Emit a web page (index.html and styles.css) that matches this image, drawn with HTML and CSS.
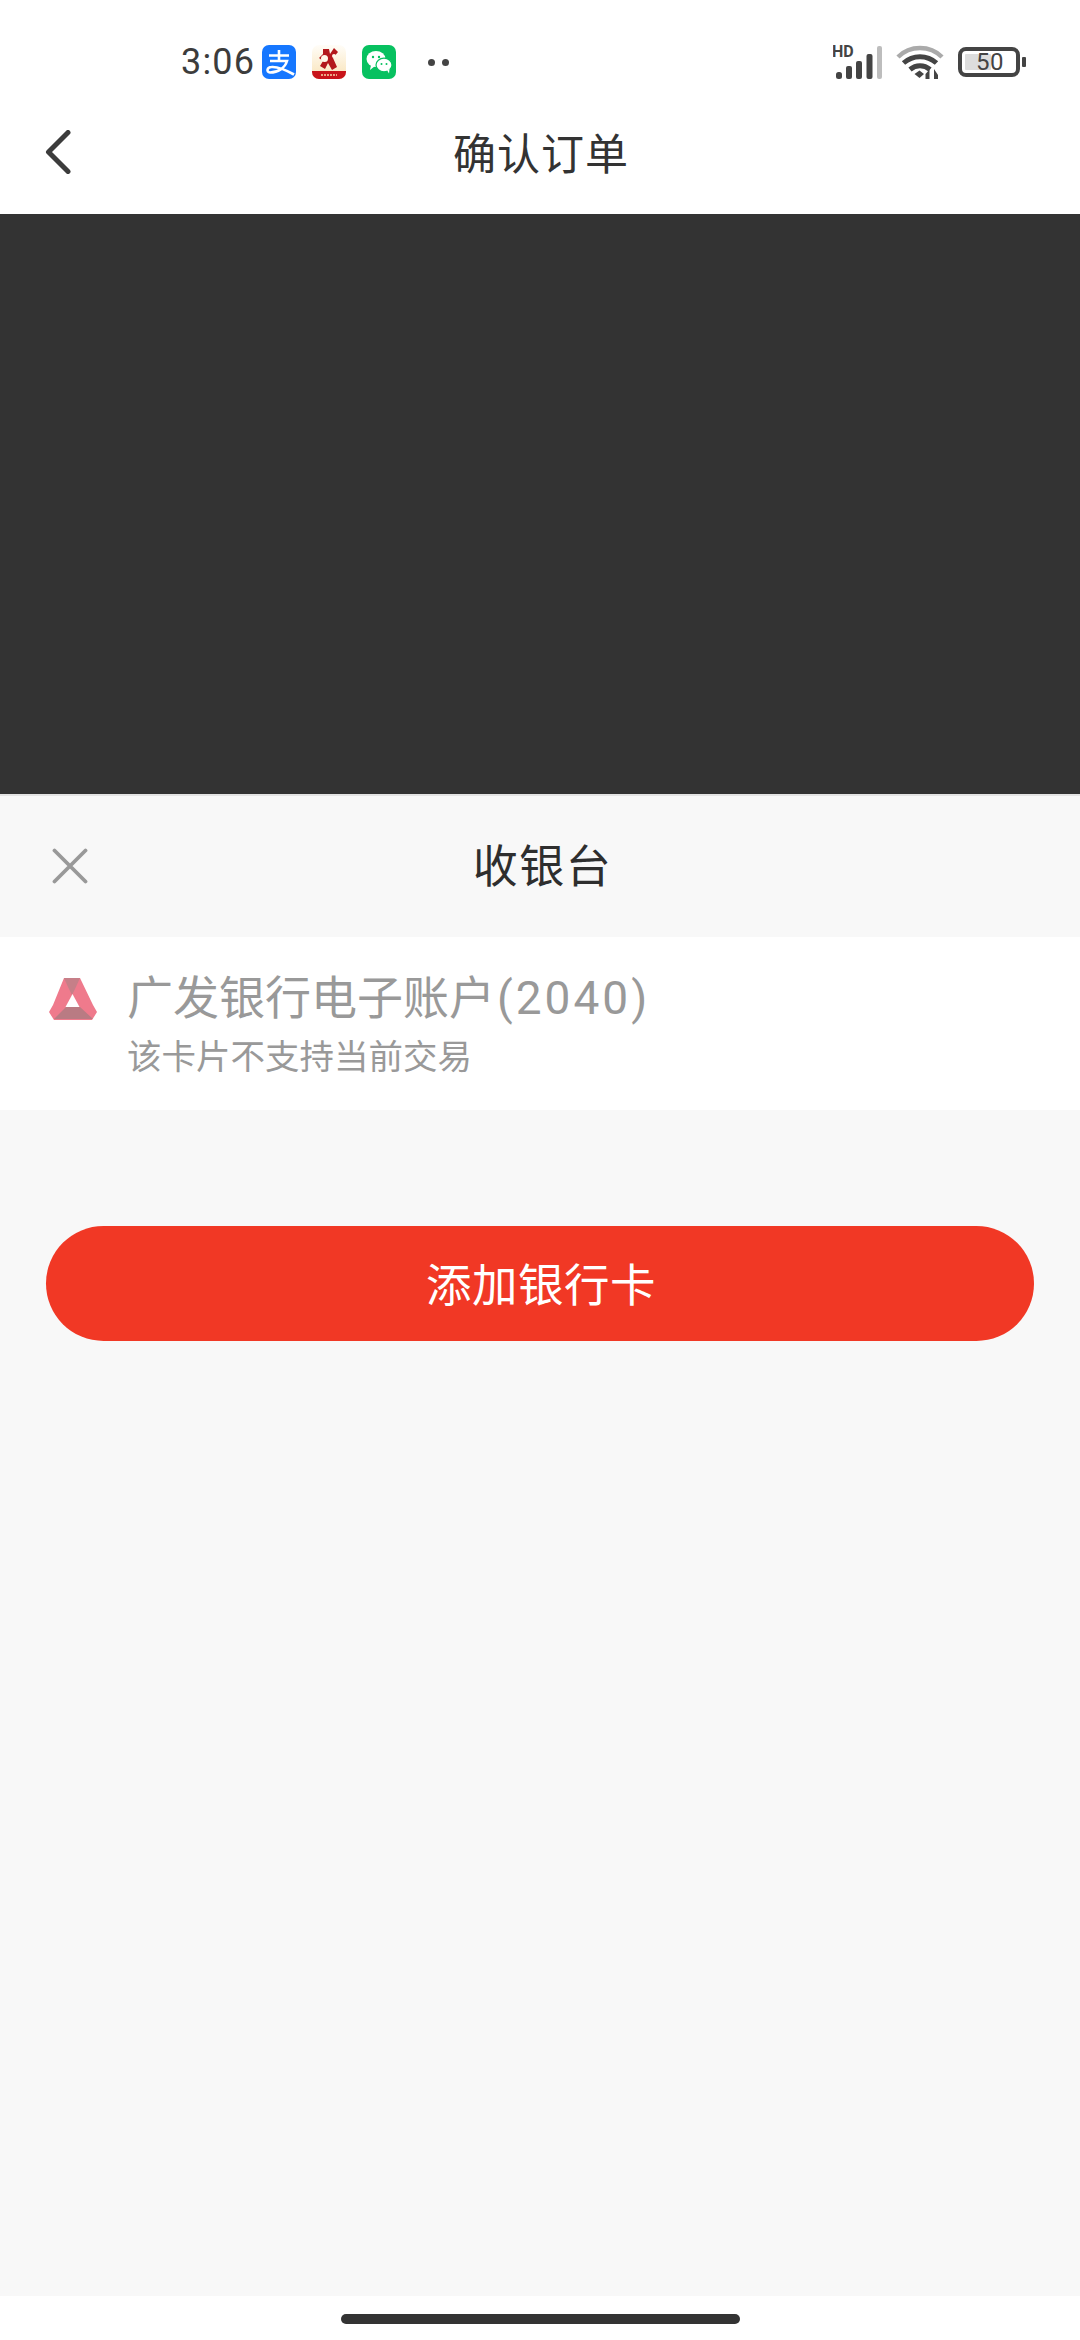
FILE: index.html
```html
<!DOCTYPE html>
<html lang="zh-CN">
<head>
<meta charset="utf-8">
<title>确认订单</title>
<link rel="stylesheet" href="styles.css">
</head>
<body>
<div class="page">
  <div class="status">
    <div class="status-left">
      <span class="time">3:06</span>
      <svg class="app" viewBox="0 0 34 34"><rect width="34" height="34" rx="7" fill="#1677ff"/><path d="M7 10.500H27M17 5V16M8 16H25C23 23 16 27.500 8 27.500C4 27 5 22 9.500 22C16 21.500 24 25 32 29.500" fill="none" stroke="#fff" stroke-width="2.600"/></svg>
      <svg class="app" viewBox="0 0 34 34"><defs><linearGradient id="cream" x1="0" y1="0" x2="0" y2="1"><stop offset="0" stop-color="#fffdf8"/><stop offset="1" stop-color="#f9e3b8"/></linearGradient></defs><rect width="34" height="34" rx="7" fill="url(#cream)"/><path d="M0 26H34V27A7 7 0 0 1 27 34H7A7 7 0 0 1 0 27Z" fill="#c8141a"/><path d="M11 4H17L18 9L22 3L26 7L21 13L25 22L20 25L16 18L13 24L8 21L11 16L7 13L11 9Z" fill="#b3181c"/><circle cx="12.500" cy="13.500" r="3.500" fill="#fff8ea"/><circle cx="22" cy="11" r="2" fill="#fff8ea"/><path d="M9 30H25" stroke="#f6d7a8" stroke-width="1.500" stroke-dasharray="2 1"/></svg>
      <svg class="app" viewBox="0 0 34 34"><rect width="34" height="34" rx="7" fill="#07c160"/><ellipse cx="14" cy="14" rx="9.500" ry="8" fill="#fff"/><path d="M9 20L8 25L13 21Z" fill="#fff"/><ellipse cx="22" cy="20" rx="8" ry="6.800" fill="#fff" stroke="#07c160" stroke-width="1.200"/><path d="M25 25L27 28.500L27.500 24Z" fill="#fff"/><circle cx="11" cy="12" r="1.200" fill="#07c160"/><circle cx="17" cy="12" r="1.200" fill="#07c160"/><circle cx="19.500" cy="19" r="1" fill="#07c160"/><circle cx="24.500" cy="19" r="1" fill="#07c160"/></svg>
      <span class="dots"><i class="dot"></i><i class="dot"></i></span>
    </div>
    <div class="status-right">
      <svg class="signal" viewBox="0 -3 50 40"><text x="-1" y="12" class="hd">HD</text><rect x="3" y="27" width="6" height="7" rx="2.500" fill="#444"/><rect x="13" y="21" width="6" height="13" rx="2" fill="#444"/><rect x="23" y="16" width="6" height="18" rx="2" fill="#444"/><rect x="33.500" y="9" width="6" height="25" rx="2" fill="#444"/><rect x="44" y="1" width="5" height="33" rx="2" fill="#bdbdbd"/></svg>
      <svg class="wifi" viewBox="0 0 48 34"><path d="M2 12C14 0 34 0 46 12" fill="none" stroke="#aaa" stroke-width="4.500"/><path d="M7.500 18C17 9.500 31 9.500 40.500 18" fill="none" stroke="#444" stroke-width="5"/><path d="M14 24.500C20 19.500 28 19.500 34 24.500" fill="none" stroke="#444" stroke-width="5"/><path d="M18.500 29L23.500 25.500L28 29L23.500 33Z" fill="#444"/><path d="M33.500 34V24.500L29.500 29V34ZM38 24V34H42V30Z" fill="#444"/></svg>
      <span class="battery-wrap">
        <span class="battery"><span class="battery-fill"></span><span class="battery-num">50</span></span>
        <span class="battery-nub"></span>
      </span>
    </div>
  </div>

  <header class="topbar">
    <svg class="back" viewBox="0 0 26 44"><path d="M23 2.500L3.500 22L23 41.500" fill="none" stroke="#3c3c3c" stroke-width="5" stroke-linecap="round" stroke-linejoin="round"/></svg>
    <h1 class="title">确认订单</h1>
  </header>

  <div class="overlay"></div>

  <section class="sheet">
    <div class="sheet-head">
      <svg class="close" viewBox="0 0 36 36"><path d="M2.500 2.500L33.500 33.500M33.500 2.500L2.500 33.500" fill="none" stroke="#999" stroke-width="3.800" stroke-linecap="round"/></svg>
      <h2 class="sheet-title">收银台</h2>
    </div>
    <div class="card-row">
      <svg class="bank-logo" viewBox="0 0 48 42"><path d="M15 0H31L44 27L48 34L43 42H5L0 34L4 27Z" fill="#ef7a8c"/><path d="M15 0H31L26 11L23 17L19 9Z" fill="#c67f88"/><path d="M17 29H31L44 41H5Z" fill="#b97b83"/><path d="M23.500 16L30.500 29H16.500Z" fill="#fff"/></svg>
      <div class="card-text">
        <div class="card-name">广发银行电子账户<span class="card-no">(2040)</span></div>
        <div class="card-note">该卡片不支持当前交易</div>
      </div>
    </div>
    <button class="add-btn"><span class="add-label">添加银行卡</span></button>
  </section>

  <div class="home-area"><span class="home-bar"></span></div>
</div>
</body>
</html>
```
FILE: styles.css
```css
* { box-sizing: border-box; }
html, body { margin: 0; padding: 0; }
body {
  width: 1080px;
  height: 2340px;
  overflow: hidden;
  background: #fff;
  font-family: "Noto Sans CJK SC", "Roboto", sans-serif;
  color: #333;
}
.page { display: flex; flex-direction: column; height: 2340px; }

.status {
  height: 90px;
  padding: 45px 54px 0 181px;
  display: flex;
  justify-content: space-between;
  align-items: flex-start;
}
.status-left { display: flex; align-items: center; height: 34px; }
.time {
  font-family: "Roboto", sans-serif;
  font-size: 36px;
  font-weight: 400;
  line-height: 34px;
  color: #3c3c3c;
  width: 81px;
  letter-spacing: 1.2px;
}
.app { width: 34px; height: 34px; margin-right: 16px; display: block; }
.dots { display: flex; gap: 7px; margin-left: 16px; }
.dot { width: 7px; height: 7px; border-radius: 50%; background: #444; display: block; }
.status-right { display: flex; align-items: center; height: 34px; }
.signal { width: 50px; height: 40px; margin-right: 13px; display: block; flex: none; }
.hd { font-family: "Roboto", sans-serif; font-weight: 700; font-size: 16px; fill: #444; }
.wifi { width: 48px; height: 34px; margin-right: 14px; display: block; }
.battery-wrap { display: flex; align-items: center; gap: 2px; }
.battery {
  width: 62px;
  height: 30px;
  border: 4px solid #444;
  border-radius: 8px;
  padding: 3px;
  display: flex;
  align-items: stretch;
}
.battery-fill { width: 26px; background: #ddd; border-radius: 1px; flex: none; }
.battery-num {
  font-family: "Roboto", sans-serif;
  font-size: 24px;
  line-height: 16px;
  margin-left: -15px;
  color: #444;
  letter-spacing: 0.5px;
  white-space: nowrap;
}
.battery-nub { width: 4px; height: 10px; background: #444; border-radius: 1px; }

.topbar {
  height: 124px;
  display: grid;
  grid-template-columns: 1fr auto 1fr;
  align-items: center;
  padding-left: 45px;
}
.back { width: 26px; height: 44px; display: block; }
.title {
  margin: -3px 43px 0 0;
  font-size: 43px;
  font-weight: 400;
  line-height: 60px;
  letter-spacing: 1px;
  color: #333;
}

.overlay { height: 580px; background: #333; flex: none; }

.sheet {
  flex: 1;
  background: #f8f8f8;
  border-top: 2px solid #e4e4e4;
  display: flex;
  flex-direction: column;
}
.sheet-head {
  height: 141px;
  display: grid;
  grid-template-columns: 1fr auto 1fr;
  align-items: center;
  padding-left: 52px;
}
.close { width: 36px; height: 36px; display: block; margin-top: -2px; }
.sheet-title {
  margin: -5px 47px 0 0;
  font-size: 45px;
  font-weight: 400;
  line-height: 60px;
  letter-spacing: 1.500px;
  color: #2e2e2e;
}
.card-row {
  height: 173px;
  background: #fff;
  display: flex;
  align-items: flex-start;
  padding: 32px 0 0 49px;
}
.bank-logo { width: 48px; height: 42px; display: block; margin-top: 9px; flex: none; }
.card-text { margin-left: 30px; }
.card-name {
  font-size: 46px;
  line-height: 50px;
  color: #999;
  font-family: "Noto Sans CJK SC", sans-serif;
  white-space: nowrap;
}
.card-no { font-family: "Roboto", sans-serif; letter-spacing: 3px; font-size: 46px; margin-left: 2px; }
.card-note {
  font-size: 34.500px;
  line-height: 44px;
  margin-top: 9px;
  color: #999;
  white-space: nowrap;
}
.add-btn {
  margin: 116px 46px 0;
  height: 115px;
  border: 0;
  border-radius: 58px;
  background: #f13825;
  color: #fff;
  font-family: inherit;
  font-size: 45.500px;
  padding: 0 0 4px 2px;
}
.add-label { letter-spacing: 0.5px; }

.home-area {
  height: 44px;
  flex: none;
  padding-top: 18px;
  display: flex;
  justify-content: center;
  align-items: flex-start;
  background: #fff;
}
.home-bar { width: 399px; height: 10px; border-radius: 5px; background: #333; display: block; }
```
